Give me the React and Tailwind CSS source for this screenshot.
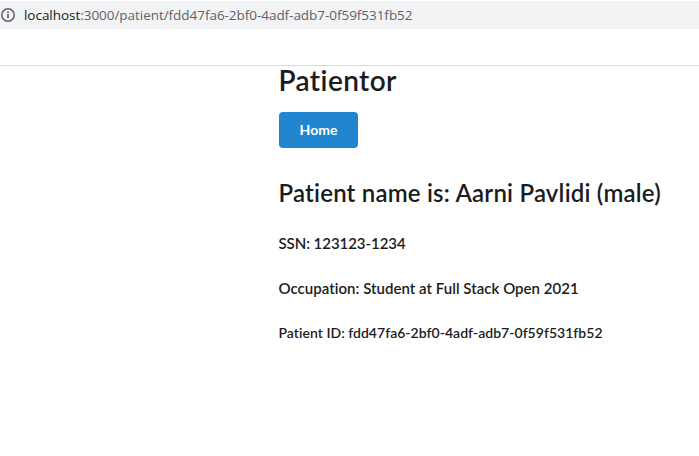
export default function App() {
  return (
    <div className="flex h-[456px] w-[699px] flex-col overflow-hidden bg-white font-['Lato',sans-serif] text-[#212121]">
      <div className="mt-px flex h-7 items-center bg-[#f1f3f4] text-[#5f6368]">
        <svg className="ml-[1px] h-[14px] w-[14px] shrink-0" viewBox="0 0 14 14" fill="none" stroke="currentColor" strokeWidth="1.5">
          <circle cx="7" cy="7" r="6.2" />
          <path d="M7 6v4.2M7 3.5v1.5" strokeWidth="1.7" />
        </svg>
        <div className="ml-[9px] whitespace-nowrap font-['Open_Sans',sans-serif] text-[13.5px] leading-[18px] tracking-[-0.04px]">
          <span className="text-[#202124]">localhost</span>:3000/patient/fdd47fa6-2bf0-4adf-adb7-0f59f531fb52
        </div>
      </div>
      <div className="h-[37px] border-b border-[#d9d9d9]" />
      <main className="flex flex-col items-start whitespace-nowrap pl-[278.5px] font-semibold text-[#1b1c1d] [font-variant-ligatures:none]">
        <h1 className="-mt-[2px] text-[28px] leading-[32px] tracking-[0.42px]">Patientor</h1>
        <button className="mt-[16px] ml-[0.5px] h-9 w-[79px] rounded bg-[#2185d0] text-[14px] font-bold leading-[14px] text-white">Home</button>
        <h2 className="mt-[31px] text-[24px] leading-[28px] tracking-[0.2px]">Patient name is: Aarni Pavlidi (male)</h2>
        <h4 className="mt-[27px] text-[15px] leading-[18px] tracking-[-0.06px]">SSN: 123123-1234</h4>
        <h4 className="mt-[27px] text-[15px] leading-[18px] tracking-[0.03px]">Occupation: Student at Full Stack Open 2021</h4>
        <h5 className="mt-[27px] text-[14px] leading-[18px] tracking-[0.03px]">Patient ID: fdd47fa6-2bf0-4adf-adb7-0f59f531fb52</h5>
      </main>
    </div>
  );
}
